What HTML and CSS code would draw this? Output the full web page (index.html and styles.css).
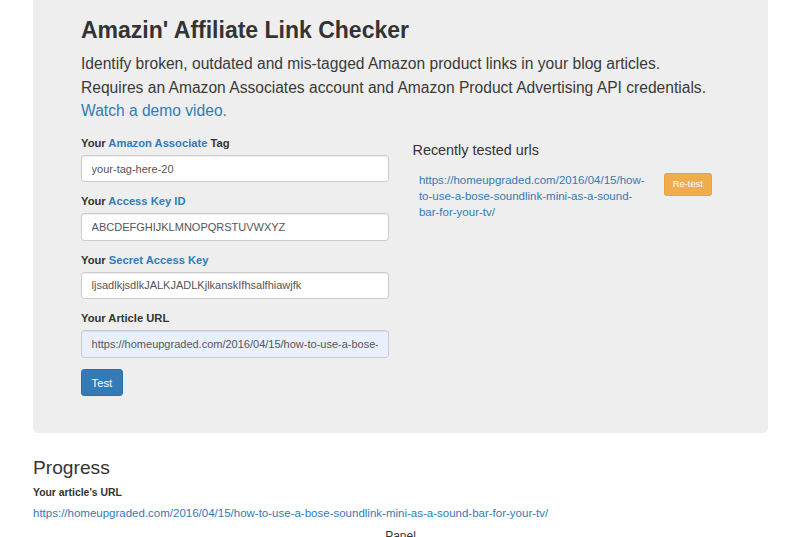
FILE: index.html
```html
<!DOCTYPE html>
<html lang="en">
<head>
<meta charset="utf-8">
<title>Amazin' Affiliate Link Checker</title>
<link rel="stylesheet" href="styles.css">
</head>
<body>
<div class="container">
  <div class="jumbotron">
    <h2 class="title">Amazin' Affiliate Link Checker</h2>
    <p class="lead">Identify broken, outdated and mis-tagged Amazon product links in your blog articles.<br>Requires an Amazon Associates account and Amazon Product Advertising API credentials.<br><a href="#">Watch a demo video.</a></p>
    <div class="row">
      <form class="col">
        <div class="form-group">
          <label class="label">Your <a href="#">Amazon Associate</a> Tag</label>
          <input class="form-control" type="text" value="your-tag-here-20">
        </div>
        <div class="form-group">
          <label class="label">Your <a href="#">Access Key ID</a></label>
          <input class="form-control" type="text" value="ABCDEFGHIJKLMNOPQRSTUVWXYZ">
        </div>
        <div class="form-group">
          <label class="label">Your <a href="#">Secret Access Key</a></label>
          <input class="form-control" type="text" value="ljsadlkjsdlkJALKJADLKjlkanskIfhsalfhiawjfk">
        </div>
        <div class="form-group">
          <label class="label">Your Article URL</label>
          <input class="form-control autofill" type="text" value="https://homeupgraded.com/2016/04/15/how-to-use-a-bose-soundlink-mini-as-a-sound-bar-for-your-tv/">
        </div>
        <button type="button" class="btn btn-primary">Test</button>
      </form>
      <div class="col">
        <h4 class="recent-title">Recently tested urls</h4>
        <table class="recent">
          <tr>
            <td class="recent-url"><a href="#">https://homeupgraded.com/2016/04/15/how-to-use-a-bose-soundlink-mini-as-a-sound-bar-for-your-tv/</a></td>
            <td class="recent-action"><button type="button" class="btn btn-warning">Re-test</button></td>
          </tr>
        </table>
      </div>
    </div>
  </div>

  <h3 class="progress-title">Progress</h3>
  <dl class="progress-info">
    <dt>Your article's URL</dt>
    <dd><a href="#">https://homeupgraded.com/2016/04/15/how-to-use-a-bose-soundlink-mini-as-a-sound-bar-for-your-tv/</a></dd>
  </dl>
  <div class="panel-title">Panel</div>
</div>
</body>
</html>
```

FILE: styles.css
```css
* { box-sizing: border-box; }

html, body {
  margin: 0;
  padding: 0;
}

body {
  font-family: "Liberation Sans", Helvetica, Arial, sans-serif;
  font-size: 11.2px;
  line-height: 1.42857;
  color: #333;
  background: #fff;
}

a {
  color: #337ab7;
  text-decoration: none;
}

.container {
  width: 735px;
  margin-left: 33px;
}

.jumbotron {
  background: #eee;
  border-radius: 0 0 5px 5px;
  padding: 17px 48px 37px;
  margin-bottom: 24px;
}

.title {
  margin: 0 0 9px;
  font-size: 23px;
  font-weight: 700;
  line-height: 26.4px;
  color: #333;
}

.lead {
  margin: 0 0 12px;
  font-size: 15.6px;
  line-height: 23.5px;
  font-weight: 300;
  color: #3a3a3a;
}

.row {
  display: grid;
  grid-template-columns: 1fr 1fr;
  margin: 0 -12px;
}

.col {
  padding: 0 12px;
  margin: 0;
}

.form-group {
  margin-bottom: 11.3px;
}

.label {
  display: block;
  font-weight: 700;
  margin-bottom: 4px;
}

.form-control {
  display: block;
  width: 100%;
  height: 27.2px;
  padding: 4.8px 9.6px;
  font-family: inherit;
  font-size: 11px;
  line-height: 1.42857;
  color: #555;
  background: #fff;
  border: 1px solid #ccc;
  border-radius: 3.2px;
  box-shadow: inset 0 1px 1px rgba(0, 0, 0, .075);
  outline: none;
}

.autofill {
  background: #e8f0fe;
}

.btn {
  display: inline-block;
  font-family: inherit;
  border: 1px solid transparent;
  border-radius: 3.2px;
  color: #fff;
  cursor: pointer;
}

.btn-primary {
  background: #337ab7;
  border-color: #2e6da4;
  padding: 4.8px 9.6px;
  font-size: 11.2px;
  line-height: 1.42857;
  height: 27.2px;
}

.btn-warning {
  background: #f0ad4e;
  border-color: #eea236;
  padding: 4px 8px;
  font-size: 9.4px;
  line-height: 12.6px;
  border-radius: 2.4px;
}

.recent-title {
  margin: 8px 0 8px;
  font-size: 14.4px;
  font-weight: 500;
  line-height: 1.1;
}

.recent {
  border-collapse: collapse;
}

.recent td {
  padding: 6.4px;
  vertical-align: top;
}

.recent-url {
  width: 244.8px;
  font-size: 11.5px;
  line-height: 15.7px;
}

.progress-title {
  margin: 0 0 8px;
  font-size: 19.2px;
  font-weight: 500;
  line-height: 1.1;
}

.progress-info {
  margin: 0 0 7px;
}

.progress-info dt {
  font-weight: 700;
  font-size: 10.4px;
  margin-bottom: 4px;
}

.progress-info dd {
  margin: 0;
  font-size: 11.5px;
}

.panel-title {
  text-align: center;
  font-size: 12px;
  color: #333;
}
```
